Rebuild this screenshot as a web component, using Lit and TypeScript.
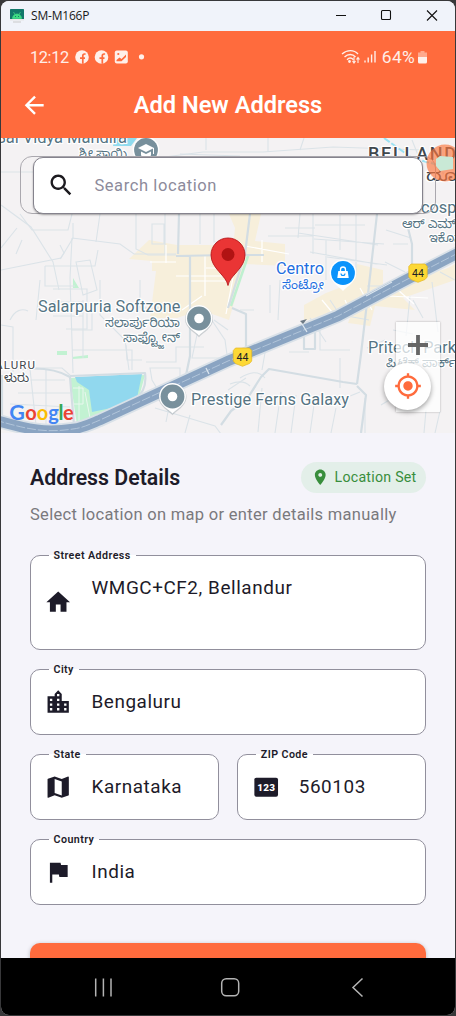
import { LitElement, html, css, svg } from "lit";
import { customElement, property } from "lit/decorators.js";

const ICONS: Record<string, string> = {
  back: "M20 11H7.83l5.59-5.59L12 4l-8 8 8 8 1.41-1.41L7.83 13H20v-2z",
  search:
    "M15.5 14h-.79l-.28-.27C15.41 12.59 16 11.11 16 9.5 16 5.91 13.09 3 9.5 3S3 5.91 3 9.5 5.91 16 9.5 16c1.61 0 3.09-.59 4.23-1.57l.27.28v.79l5 4.99L20.49 19l-4.99-5zm-6 0C7.01 14 5 11.99 5 9.5S7.01 5 9.5 5 14 7.01 14 9.5 11.99 14 9.5 14z",
  home: "M10 20v-6h4v6h5v-8h3L12 3 2 12h3v8z",
  city: "M15 11V5l-3-3-3 3v2H3v14h18V11h-6zm-8 8H5v-2h2v2zm0-4H5v-2h2v2zm0-4H5V9h2v2zm6 8h-2v-2h2v2zm0-4h-2v-2h2v2zm0-4h-2V9h2v2zm0-4h-2V5h2v2zm6 12h-2v-2h2v2zm0-4h-2v-2h2v2z",
  map: "M20.5 3l-.16.03L15 5.1 9 3 3.36 4.9c-.21.07-.36.25-.36.48V20.5c0 .28.22.5.5.5l.16-.03L9 18.9l6 2.1 5.64-1.9c.21-.07.36-.25.36-.48V3.5c0-.28-.22-.5-.5-.5zM15 19l-6-2.11V5l6 2.11V19z",
  flag: "M14.4 6L14 4H5v17h2v-7h5.6l.4 2h7V6z",
  pin: "M12 2C8.13 2 5 5.13 5 9c0 5.25 7 13 7 13s7-7.75 7-13c0-3.87-3.13-7-7-7zm0 9.5c-1.38 0-2.5-1.12-2.5-2.5s1.12-2.5 2.5-2.5 2.5 1.12 2.5 2.5-1.12 2.5-2.5 2.5z",
  locate:
    "M12 8c-2.21 0-4 1.79-4 4s1.79 4 4 4 4-1.79 4-4-1.79-4-4-4zm8.94 3c-.46-4.17-3.77-7.48-7.94-7.94V1h-2v2.06C6.83 3.52 3.52 6.83 3.06 11H1v2h2.06c.46 4.17 3.77 7.48 7.94 7.94V23h2v-2.06c4.17-.46 7.48-3.77 7.94-7.94H23v-2h-2.06zM12 19c-3.87 0-7-3.13-7-7s3.13-7 7-7 7 3.13 7 7-3.13 7-7 7z",
};

const icon = (name: string) =>
  name === "digits"
    ? html`<svg class="icon" viewBox="0 0 24 24">
        <rect x="2" y="4" width="20" height="16" rx="1.6" fill="currentColor" />
        <text x="12.1" y="15" text-anchor="middle" font-size="8.4" font-weight="900" letter-spacing=".3" fill="#fff">123</text>
      </svg>`
    : html`<svg class="icon" viewBox="0 0 24 24"><path fill="currentColor" d=${ICONS[name]} /></svg>`;

@customElement("address-field")
class AddressField extends LitElement {
  @property() label = "";
  @property() value = "";
  @property() icon = "";
  @property({ type: Boolean, reflect: true }) tall = false;

  static styles = css`
    :host {
      position: relative;
      box-sizing: border-box;
      display: flex;
      align-items: center;
      height: 66px;
      min-width: 0;
      border: 1px solid #918f9c;
      border-radius: 10px;
      background: #fff;
      color: #1d1b29;
      font-family: Roboto, sans-serif;
    }
    :host([tall]) {
      height: 95px;
    }
    .icon {
      width: 28.4px;
      height: 28.4px;
      margin-left: 13.3px;
      flex: none;
    }
    .value {
      margin-left: 18.8px;
      font-size: 18.9px;
      line-height: 28px;
      letter-spacing: 0.57px;
      white-space: nowrap;
    }
    :host([tall]) .value {
      align-self: flex-start;
      margin-top: 18px;
    }
    .label {
      position: absolute;
      left: 17.5px;
      top: -8px;
      padding: 0 5px;
      font-size: 10.7px;
      font-weight: 600;
      line-height: 15px;
      letter-spacing: 0.42px;
      white-space: nowrap;
      background: linear-gradient(#f5f4fa 7px, #fff 7px);
    }
  `;

  render() {
    return html`<span class="label">${this.label}</span>${icon(this.icon)}<span class="value">${this.value}</span>`;
  }
}

const marker = (x: number, y: number) => svg`
  <g transform="translate(${x} ${y})">
    <path d="M0 18C-3 14-14 9-14 0a14 14 0 0 1 28 0C14 9 3 14 0 18z" fill="#9aa5ab" opacity=".45" transform="translate(0 .8)"/>
    <path d="M0 17C-3 13-13.400 9-13.400 0a13.400 13.400 0 0 1 26.800 0C13.400 9 3 13 0 17z" fill="#fff"/>
    <circle r="11.900" fill="#78909c"/><circle r="4.800" fill="#fff"/>
  </g>`;

const shield = (x: number, y: number) => svg`
  <g transform="translate(${x} ${y})">
    <path d="M-7-9H7L9.200-6.500V4L7 6.500 0 9.300-7 6.500-9.200 4V-6.500z" fill="#fdd835" stroke="#e3b624" stroke-width=".7"/>
    <text y="3.900" text-anchor="middle" font-size="10.500" fill="#202124">44</text>
  </g>`;

const ROADS = [
  "M1 172h32l40-3 130-17h60l70-5 90 3",
  "M1 205l30 22 22 35 6 28M1 248l16-20M1 270l60-12 12-20v-15",
  "M20 214l12 16h36l4-16M100 214l-4 28M136 214v35l12 6h28",
  "M72 238l48 6 14 10h42M72 238l-2 40 3 95M45 266h50l3-16M45 266v20h30",
  "M76 262l14-2 7 30-14 5zM60 245l4 8-4 6",
  "M152 224h12v20h-12zM165 214v40M200 214v30M214 214v28h22",
  "M300 214l-2 24M313 214v40M326 240v40M340 215v35M356 215v60M298 233l80 12M310 252l66 12M285 228h30M315 225h50M268 236h45M314 239l70 5M327 257l60 8",
  "M386 230l25 8M420 150l25 25M412 140l8 20M250 256l-12 -6",
  "M393 244h15M385 262l20 10M432 282l6 50M410 296l-4 40M440 272l15 8",
  "M1 325l12 2v45M10 320c5-10 12-12 18-9M40 280l-4 40M53 289h34v40H66M83 300v58M100 280v35l25 25 4 30",
  "M72 350h60v20M72 330h20v-20M140 280v28h25M126 345l1 15h15M146 362h30v-15h28",
  "M150 368h30v15l-22 7-6-10zM198 330l-6 28h36M205 310l20 30 3 22M214 320l14 10",
  "M22 368h40l9 8M20 380h45M18 393h52M10 404l60 3M46 370v60M30 369l6 56M60 405l-6 25",
  "M155 408l60 18 6 8M170 402l-4 20M190 415l-5 18M228 390l18-12M240 310h14M270 285v28M280 280l-2 40",
  "M246 400l10-14M240 378c10-6 18-8 25 0M230 384c10-4 16-2 20 2M262 388l-4 44M281 392l-6 41M296 395l-5 38M315 398l-5 35M336 408l-5 25",
  "M262 370l4-23 20-14M289 352h20M320 328v22h30M360 392l-30 12-10-10M365 398v35M381 405l10-6M426 410l-2 23M440 411l-5 22M390 352l10-10M393 330l20 4",
  "M330 300l12 18M367 286h20M347 316l22 4M413 300l10 18M310 318l16 24M340 388v-30M367 348l18-8",
  "M53 302h30M53 316h30M22 240l-6 14M206 138v12M268 152v-14M300 150l4-12M180 154l60 2",
];

const COMMERCIAL_ROADS = [
  "M205 256v40M176 276h52M189 281h37M206 268h22M150 262h26M166 245v18M182 310l20-14M236 262l-10 52M262 240v22M245 246l44 8",
  "M345 300l6 14M360 288l12 22M322 300l10 12M398 290l16 14M388 296l40 2",
];

const MAJOR_ROADS = [
  "M179 214l-1 40M176 256l52-1M228 255h36M190 256v100l-5 24",
  "M250 214l-5 40-17 54M377 214l-9 80-7 60-4 30M407 224l5 20v34",
  "M357 384l-14-2-74-13-8 8-14 22-16 12-10 14M357 386l9 9-5 38M232 308l14 6v42M304 325v24h11v-20",
  "M22 369c24-2 38 2 48 8l4 48M70 376l75-3c2 15-4 22-10 26M2 375v40",
];

const HIGHWAY = "M-5 420C30 430 45 433 73 429 82 428 88 425 100 420L228 361 338 316 402 282 462 251";

@customElement("street-map")
class StreetMap extends LitElement {
  static styles = css`
    :host {
      display: block;
    }
    .map {
      display: block;
      width: 100%;
      height: 100%;
      font-family: Roboto, "Noto Sans Kannada", "Noto Sans", sans-serif;
    }
    .halo text {
      paint-order: stroke;
      stroke: #fff;
      stroke-width: 2.5px;
      stroke-linejoin: round;
    }
  `;

  render() {
    return html`<svg class="map" viewBox="1 138 454 295" preserveAspectRatio="none">
      <rect x="0" y="137" width="456" height="297" fill="#f4f2f3" />
      <g fill="#f7efdb">
        <path d="M149 240l28 5h34l22 3 2-20-6-14h32l-6 27 30 3v22l-40-2-16 56-28-10-24 8h-27l6-47h-4v-10l-23-2z" />
        <path d="M357 264l26 6v18l72-22v14l-52 18 12 12-40-4-5 20-22-3 6-16-50 14v-16l22-12 26-10z" />
        <path d="M425 282l30-8v-10z" />
      </g>
      <path d="M115 138h22l-6 8h-18z" fill="#90dbee" />
      <path d="M73 278l6 10h-6zM57 351h10v4H57zM72 357l16-2v3l-16 1zM70 378l75-3-6 22-50 22-12 6z" fill="#c2f2d2" />
      <path d="M75 377l67-3-5 24-16 8-29 6-3-22-12-8z" fill="#91d8ee" />
      <path d="M248 256l-17 50" stroke="#bff0d0" stroke-width="2.500" fill="none" />
      <g fill="none" stroke="#dbe3e8" stroke-width="1.100">${ROADS.map((d) => svg`<path d=${d}/>`)}</g>
      <g fill="none" stroke="#fff" stroke-width="1.200">${COMMERCIAL_ROADS.map((d) => svg`<path d=${d}/>`)}</g>
      <g fill="none" stroke="#d3dde3" stroke-width="2.200" stroke-linejoin="round">${MAJOR_ROADS.map((d) => svg`<path d=${d}/>`)}</g>
      <path d="M73 388h10v16h-9M79 386v38M85 392l5 26" stroke="#e9f7ee" fill="none" />
      <path d="M384 138l28 20 30 8" stroke="#9be1f2" stroke-width="2" stroke-dasharray="7 2" fill="none" />
      <path d=${HIGHWAY} fill="none" stroke="#d9e1e8" stroke-width="14" />
      <path d=${HIGHWAY} fill="none" stroke="#8aa4c2" stroke-width="10.500" />
      <path d=${HIGHWAY} fill="none" stroke="#b6c8dc" stroke-width=".9" stroke-dasharray="9 2" />
      <path d="M206 368l3 6M302 324l5 8M366 296l26-14" stroke="#dbe5ee" stroke-width="1.300" />
      <path d="M300 321l7-2-4 5z" fill="#6d7a86" />

      <g class="halo" fill="#557483">
        <text x="-4" y="142.600" font-size="16.500" textLength="131">Sai Vidya Mandira</text>
        <text x="79" y="158" font-size="13" textLength="48" lengthAdjust="spacingAndGlyphs">ಶ್ರೀ ಸಾಯಿ</text>
        <text x="38" y="312" font-size="16.300" textLength="142.500">Salarpuria Softzone</text>
        <text x="105" y="327" font-size="13" textLength="75" lengthAdjust="spacingAndGlyphs">ಸಲಾರ್ಪುರಿಯಾ</text>
        <text x="123" y="342" font-size="13" textLength="57" lengthAdjust="spacingAndGlyphs">ಸಾಫ್ಟ್ಜೋನ್</text>
        <text x="191" y="405" font-size="16.300" textLength="158">Prestige Ferns Galaxy</text>
        <text x="368" y="353" font-size="16.300" textLength="88">Pritech Park</text>
        <text x="386" y="367" font-size="12.500" textLength="70" lengthAdjust="spacingAndGlyphs">ಪ್ರಿಟೆಕ್ ಪಾರ್ಕ್</text>
        <text x="421" y="213" font-size="16.300">cospace</text>
        <text x="402" y="228" font-size="12.500" textLength="54" lengthAdjust="spacingAndGlyphs">ಆರ್ ಎಮ್</text>
        <text x="429" y="242" font-size="12.500" textLength="38" lengthAdjust="spacingAndGlyphs">ಇಕೊಸ್</text>
      </g>
      <g class="halo" fill="#1f6fe0">
        <text x="276" y="274" font-size="16.300" textLength="48">Centro</text>
        <text x="282" y="289" font-size="12.500" textLength="42" lengthAdjust="spacingAndGlyphs">ಸೆಂಟ್ರೋ</text>
      </g>
      <g class="halo" fill="#3f474d">
        <text x="368" y="160" font-size="18" font-weight="500" letter-spacing="1.750">BELLANDUR</text>
        <text x="426" y="181" font-size="16.500" textLength="52" lengthAdjust="spacingAndGlyphs">ದೂರು</text>
        <text x="-5" y="369" font-size="11.500" letter-spacing="1.150">ALURU</text>
        <text x="4" y="382" font-size="11.500" textLength="25" lengthAdjust="spacingAndGlyphs">ಳುರು</text>
      </g>

      ${marker(199, 318.500)} ${marker(172.500, 396.500)}
      <circle cx="146" cy="150" r="13.400" fill="#fff" />
      <circle cx="146" cy="150" r="11.900" fill="#78909c" />
      <path d="M138 148l8-4 8 4-8 4zM141 151.500v4l5 2.500 5-2.500v-4l-5 2.500z" fill="#fff" />
      <path d="M153.500 148v6" stroke="#fff" />
      <path d="M343 291c-3-4-13.400-9-13.400-18a13.400 13.400 0 0 1 26.800 0c0 9-10.400 14-13.400 18z" fill="#fff" />
      <circle cx="343" cy="273" r="11.900" fill="#0b93fb" />
      <path d="M338.300 271h9.400l1 7h-11.400z" fill="#fff" />
      <path d="M340.500 271.500v-2a2.500 2.500 0 0 1 5 0v2" fill="none" stroke="#fff" stroke-width="1.300" />
      <path d="M341 273.500a2 2 0 0 0 4 0" fill="none" stroke="#0b93fb" stroke-width="1.100" />
      ${shield(242.500, 357)} ${shield(418, 273)}
      <path d="M228 285.500c-1.500-10-17-17-17-30.500a17 17 0 0 1 34 0c0 13.500-15.500 20.500-17 30.500z" fill="#ea3535" stroke="#b8191c" stroke-width=".9" />
      <circle cx="228" cy="254.500" r="6.500" fill="#b11313" />

      <g font-family="Lato, 'Open Sans', sans-serif" font-weight="700">
        <text y="419.500" font-size="20"><tspan x="9.300" font-size="21.500" fill="#4285f4">G</tspan><tspan x="25.200" fill="#ea4335">o</tspan><tspan x="36.800" fill="#fbbc05">o</tspan><tspan x="48.300" fill="#4285f4">g</tspan><tspan x="58.500" fill="#34a853">l</tspan><tspan x="63" fill="#ea4335">e</tspan></text>
      </g>
    </svg>`;
  }
}

@customElement("app-root")
class AppRoot extends LitElement {
  static styles = css`
    :host {
      display: block;
      box-sizing: border-box;
      width: 456px;
      height: 1016px;
      padding: 1px;
      overflow: hidden;
      background: #38383a;
      font-family: Roboto, sans-serif;
    }
    .window {
      display: flex;
      flex-direction: column;
      height: 1014px;
      overflow: hidden;
      border-radius: 8px;
      background: #f5f4fa;
    }
    .titlebar {
      display: flex;
      align-items: center;
      height: 30px;
      flex: none;
      padding-left: 9px;
      background: #f0f3fa;
      color: #191919;
    }
    .app-icon {
      width: 14px;
      height: 14px;
      margin-right: 7px;
    }
    .device {
      flex: 1;
      font: 12px/16px "Open Sans", sans-serif;
      letter-spacing: -0.2px;
    }
    .controls {
      width: 120px;
      height: 30px;
    }
    .header {
      height: 107px;
      flex: none;
      background: #ff6b3d;
      color: #fff;
    }
    .status {
      display: flex;
      align-items: center;
      height: 52px;
      padding: 0 28px 0 29px;
      color: #ffeee8;
      font-size: 17.4px;
    }
    .clock {
      width: 45px;
      font-size: 16.4px;
      letter-spacing: -0.4px;
      white-space: nowrap;
    }
    .notices {
      width: 72px;
      height: 16px;
    }
    .signals {
      width: 36px;
      height: 16px;
      margin-left: auto;
    }
    .percent {
      margin: 0 3px 0 5px;
      letter-spacing: 0.3px;
    }
    .battery {
      width: 9px;
      height: 14px;
    }
    .appbar {
      display: grid;
      grid-template-columns: 66px 1fr 66px;
      align-items: center;
      height: 44px;
    }
    .icon {
      width: 28.4px;
      height: 28.4px;
      flex: none;
    }
    .appbar .icon {
      margin-left: 19px;
    }
    .title {
      margin: 0;
      text-align: center;
      font-size: 23.6px;
      line-height: 28px;
      font-weight: 600;
    }
    .map-area {
      position: relative;
      height: 295px;
      flex: none;
      overflow: hidden;
    }
    street-map {
      height: 295px;
    }
    .search-outline {
      position: absolute;
      box-sizing: border-box;
      left: 19px;
      top: 18px;
      width: 416px;
      height: 58px;
      border: 1px solid #aaa8ae;
      border-radius: 12px;
    }
    .search {
      position: absolute;
      box-sizing: border-box;
      left: 32px;
      top: 19px;
      width: 390px;
      height: 57px;
      display: flex;
      align-items: center;
      gap: 19px;
      padding-left: 13px;
      border: 1px solid #85838d;
      border-radius: 10px;
      background: #fff;
      box-shadow: 0 1px 2px rgba(0, 0, 0, 0.35);
      color: #1d1b20;
    }
    .placeholder {
      color: #8d8b9b;
      font-size: 16.5px;
      letter-spacing: 0.59px;
    }
    .bubble {
      position: absolute;
      left: 425px;
      top: 6px;
      width: 38px;
      height: 38px;
    }
    .zoom {
      position: absolute;
      left: 395px;
      top: 184px;
      width: 44px;
      height: 90px;
      background: rgba(255, 255, 255, 0.72);
      box-shadow: 0 0 2px rgba(0, 0, 0, 0.3);
    }
    .locate {
      position: absolute;
      left: 383px;
      top: 224.5px;
      width: 47px;
      height: 47px;
      display: grid;
      place-items: center;
      border-radius: 50%;
      background: #fff;
      box-shadow: 0 2px 5px rgba(0, 0, 0, 0.38);
      color: #ff6b3d;
    }
    .locate .icon {
      width: 28px;
      height: 28px;
    }
    .details {
      box-sizing: border-box;
      height: 525px;
      flex: none;
      overflow: hidden;
      padding: 28.5px 29px 0;
    }
    .heading-row {
      display: flex;
      align-items: center;
      justify-content: space-between;
      height: 31px;
    }
    .heading {
      margin: 2px 0 0;
      font-size: 21.3px;
      line-height: 28px;
      font-weight: 600;
      color: #1d1b29;
    }
    .badge {
      box-sizing: border-box;
      display: flex;
      align-items: center;
      gap: 5px;
      height: 31px;
      padding: 0 9.5px;
      border-radius: 16px;
      background: #e3efe9;
      color: #388e3c;
      font-size: 14.2px;
      letter-spacing: 0.25px;
      white-space: nowrap;
    }
    .badge .icon {
      width: 18.5px;
      height: 18.5px;
    }
    .hint {
      margin: 10.5px 0 0;
      font-size: 16.5px;
      line-height: 24px;
      letter-spacing: 0.3px;
      color: #7a797d;
      white-space: nowrap;
    }
    .fields {
      display: grid;
      grid-template-columns: 1fr 1fr;
      gap: 19px 18.5px;
      margin-top: 28px;
    }
    .wide {
      grid-column: 1 / -1;
    }
    .save {
      height: 57px;
      margin-top: 38px;
      border-radius: 10px;
      background: #ff6b3d;
      box-shadow: 0 1px 4px rgba(0, 0, 0, 0.25);
    }
    .navbar {
      height: 57px;
      flex: none;
      background: #000;
    }
    .navbar svg {
      display: block;
    }
  `;

  render() {
    return html`<div class="window">
      <div class="titlebar">
        <svg class="app-icon" viewBox="0 0 14 14">
          <rect width="14" height="11" rx=".6" fill="#12786a" />
          <path d="M2.500 9.500a4.500 4.500 0 0 1 9 0zM3.500 3l1.500 2.500M10.500 3L9 5.500" fill="#3ddc84" stroke="#3ddc84" stroke-width=".7" />
          <path d="M5 7.500h1M8 7.500h1" stroke="#12786a" />
          <path d="M0 10h14v1.500H0z" fill="#e6e6e6" /><path d="M3 13h8" stroke="#c9c9c9" />
        </svg>
        <span class="device">SM-M166P</span>
        <svg class="controls" viewBox="335 1 120 30" fill="none" stroke="#111" stroke-width="1.100">
          <path d="M336 15.500h10" /><rect x="381.500" y="10.500" width="9" height="9" rx="1" /><path d="M427 10.500l10 10M437 10.500l-10 10" />
        </svg>
      </div>

      <div class="header">
        <div class="status">
          <span class="clock">12:12</span>
          <svg class="notices" viewBox="75 49.500 72 16">
            ${[82, 101.500].map(
              (x) => svg`<circle cx=${x} cy="57.500" r="6.800" fill="#fff0ea"/>
              <path d="M${x + 0.8} 64.300v-8c0-1.200.6-1.800 1.800-1.800h1M${x - 2} 58.600h5" stroke="#ff6b3d" stroke-width="1.700" fill="none"/>`
            )}
            <rect x="114.800" y="51" width="13" height="13" rx="2" fill="#fff0ea" />
            <circle cx="118.300" cy="54.500" r="1.100" fill="#ff6b3d" />
            <path d="M116.500 61.800v-1.300l3-2.500 2 1.500 4.500-4.500v2.500l-4.500 4.300z" fill="#ff6b3d" />
            <circle cx="141.500" cy="57.300" r="2.600" fill="#fff0ea" />
          </svg>
          <svg class="signals" viewBox="339 49 36 16" fill="none" stroke="#ffeee8" stroke-width="1.400">
            <path d="M340 54c5-4.500 12-4.500 16 0M342.500 57c3.500-3.300 8-3.300 11 0M345 59.700c2-2 4.500-2 6.500 0" />
            <circle cx="347.500" cy="61.500" r=".7" fill="#ffeee8" />
            <path d="M352 57v5.500M350.500 61l1.500 2 1.500-2M356 63v-5M354.500 59.500l1.500-2 1.500 2" stroke-width="1.100" />
            <path d="M363 62.500v-2M366.200 62.500v-5M369.600 62.500V54.500M373 62.500V51" />
          </svg>
          <span class="percent">64%</span>
          <svg class="battery" viewBox="0 0 9 14">
            <path d="M2.500 1h4v1.500H9V7.500H0v-5h2.500z" fill="#ffa98c" /><path d="M0 7h9v5a1.500 1.500 0 0 1-1.500 1.500h-6A1.500 1.500 0 0 1 0 12z" fill="#fff0ea" />
          </svg>
        </div>
        <div class="appbar">
          ${icon("back")}
          <h1 class="title">Add New Address</h1>
        </div>
      </div>

      <div class="map-area">
        <street-map></street-map>
        <div class="search-outline"></div>
        <div class="search">${icon("search")}<span class="placeholder">Search location</span></div>
        <svg class="bubble" viewBox="0 0 38 38">
          <circle cx="19" cy="19" r="18.500" fill="#fb753d" opacity=".66" />
          <path d="M10 15l4-3 13 1v12l-13 2-4-5z" fill="#c9e9d6" />
        </svg>
        <svg class="zoom" viewBox="0 0 44 90"><path d="M12 23h20M22 13v20" stroke="#666" stroke-width="3.800" /></svg>
        <div class="locate">${icon("locate")}</div>
      </div>

      <div class="details">
        <div class="heading-row">
          <h2 class="heading">Address Details</h2>
          <span class="badge">${icon("pin")}<span>Location Set</span></span>
        </div>
        <p class="hint">Select location on map or enter details manually</p>
        <div class="fields">
          <address-field class="wide" tall label="Street Address" icon="home" value="WMGC+CF2, Bellandur"></address-field>
          <address-field class="wide" label="City" icon="city" value="Bengaluru"></address-field>
          <address-field label="State" icon="map" value="Karnataka"></address-field>
          <address-field label="ZIP Code" icon="digits" value="560103"></address-field>
          <address-field class="wide" label="Country" icon="flag" value="India"></address-field>
        </div>
        <div class="save"></div>
      </div>

      <div class="navbar">
        <svg viewBox="1 958 454 57" width="454" height="57" fill="none" stroke="#b4b4b4" stroke-width="1.500">
          <path d="M95.700 978.500v18M103.400 978.500v18M111 978.500v18" />
          <rect x="221.700" y="978.700" width="17" height="17" rx="4.500" />
          <path d="M362.500 978.500l-9.500 9 9.500 9" />
        </svg>
      </div>
    </div>`;
  }
}
